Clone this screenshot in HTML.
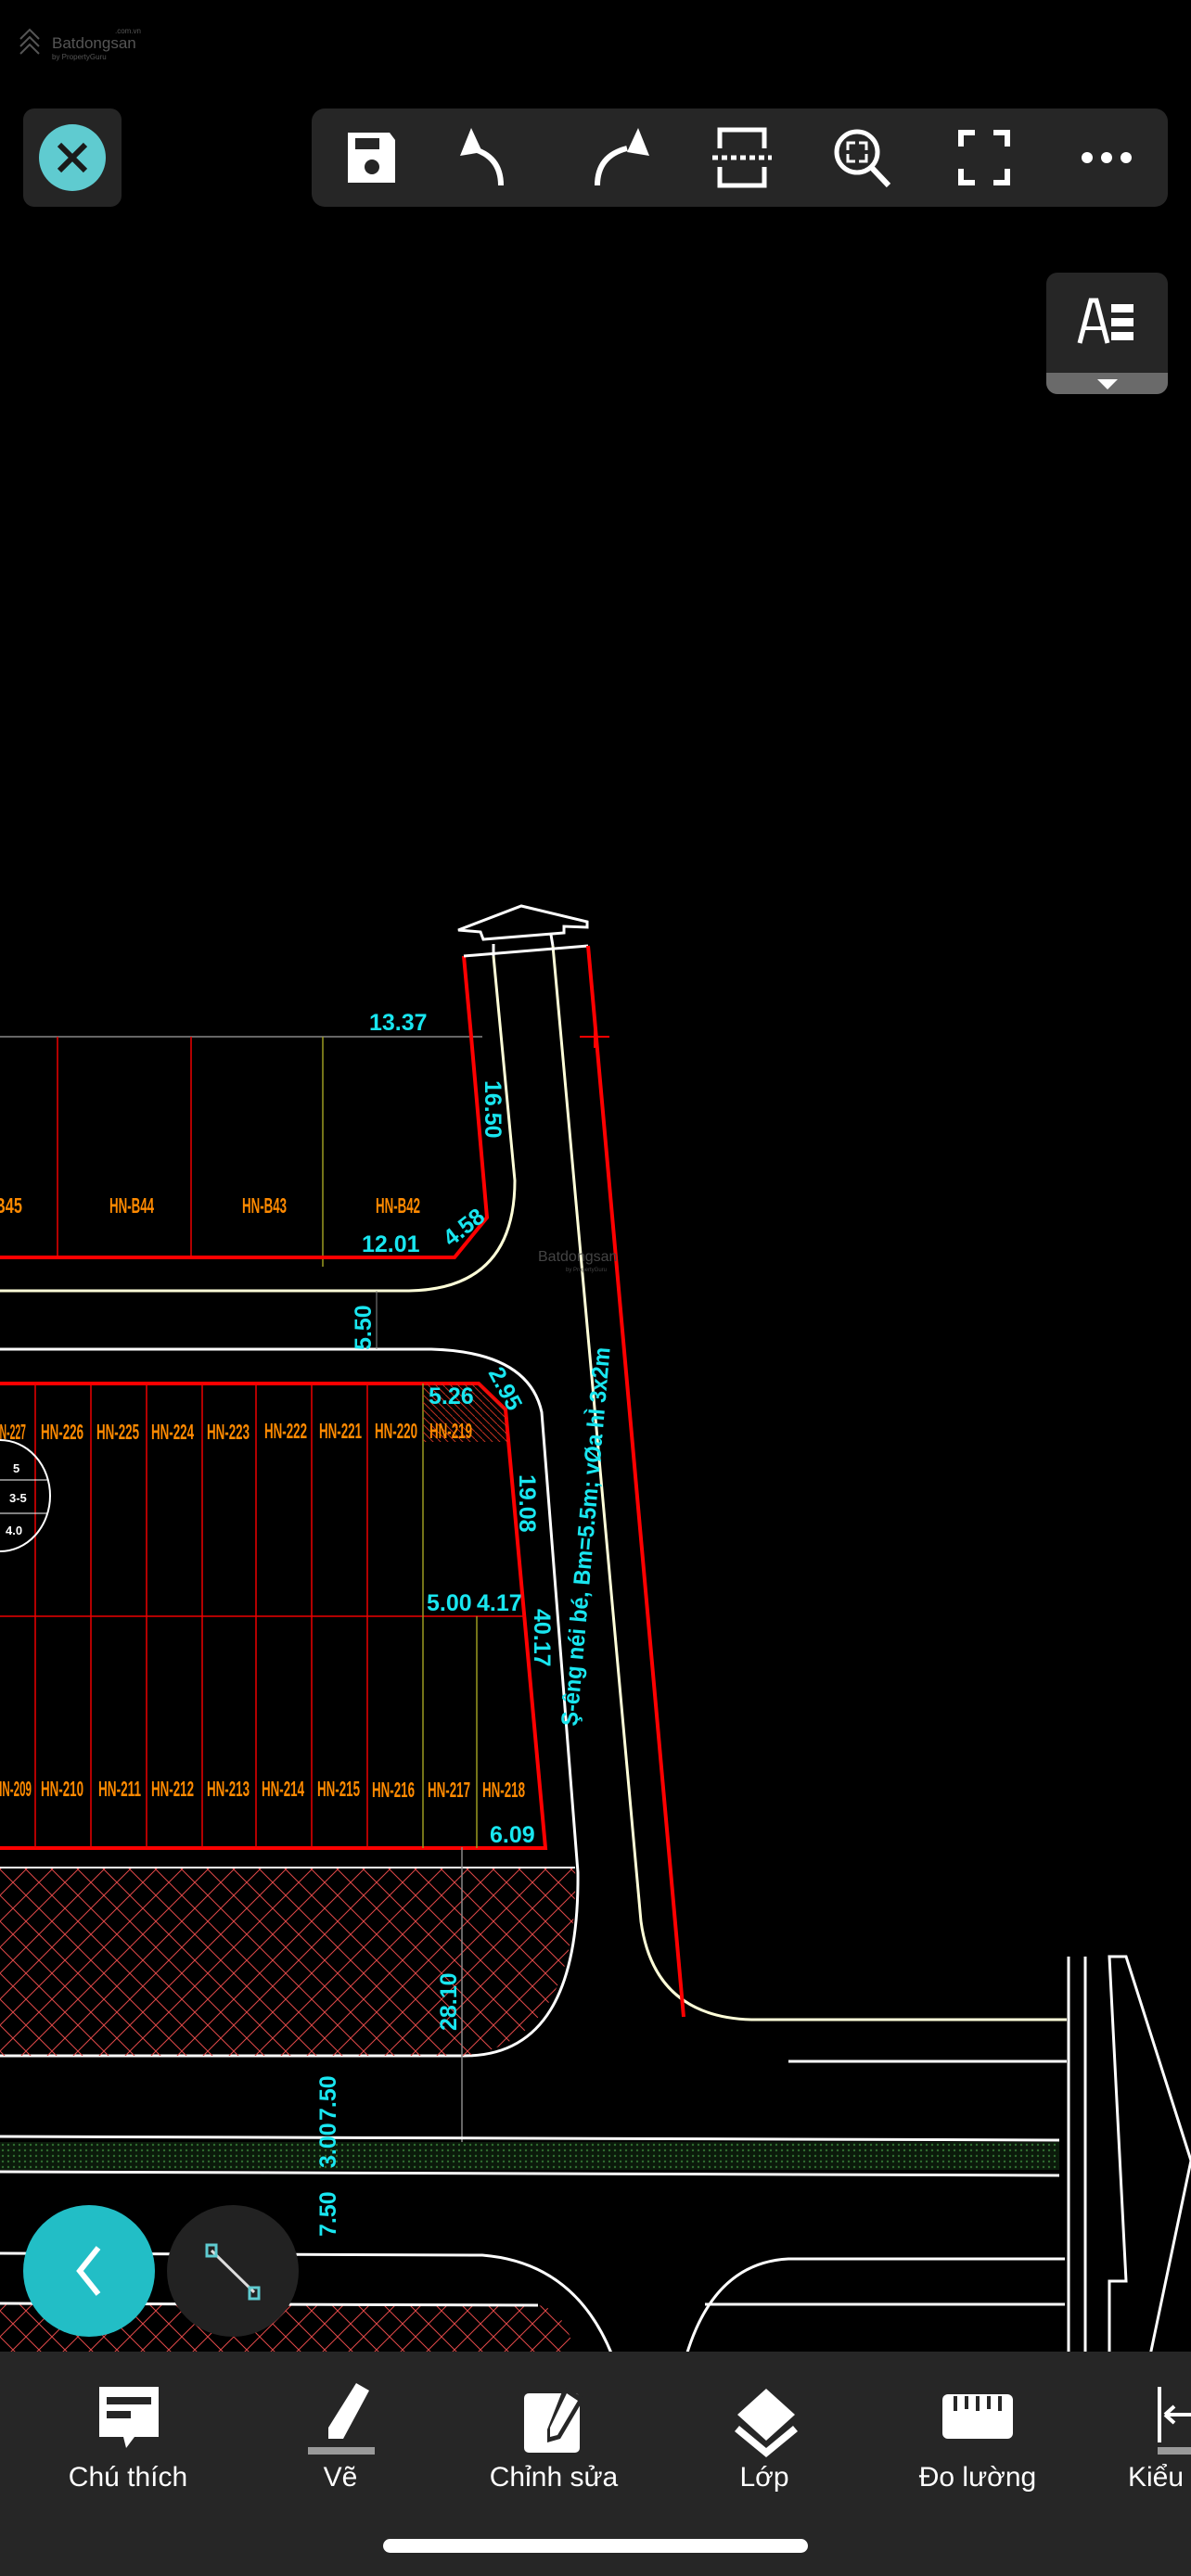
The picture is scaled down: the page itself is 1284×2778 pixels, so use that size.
<!DOCTYPE html>
<html><head><meta charset="utf-8"><style>
html,body{margin:0;padding:0;background:#000;}
body{width:1284px;height:2778px;overflow:hidden;position:relative;font-family:"Liberation Sans",sans-serif;}
svg{position:absolute;left:0;top:0;}
.c{fill:#19e6f0;font-family:"Liberation Sans",sans-serif;font-size:25px;font-weight:bold;}
.o{fill:#ff8a00;font-family:"Liberation Sans Narrow","Liberation Sans",sans-serif;font-size:23px;font-weight:bold;}
.lbl{fill:#fff;font-family:"Liberation Sans",sans-serif;font-size:30px;text-anchor:middle;}
</style></head><body>
<svg width="1284" height="2778" viewBox="0 0 1284 2778">
<defs>
<pattern id="hx" width="28" height="28" patternUnits="userSpaceOnUse">
<path d="M0 0L28 28M28 0L0 28" stroke="#e04848" stroke-width="1"/>
</pattern>
<pattern id="gd" width="6" height="6" patternUnits="userSpaceOnUse">
<rect width="6" height="6" fill="#0b1a0b"/><circle cx="3" cy="3" r="1.2" fill="#2f6b2f"/>
</pattern>
<pattern id="rh" width="8" height="8" patternUnits="userSpaceOnUse">
<path d="M0 0L8 8" stroke="#c03020" stroke-width="1"/>
</pattern>
</defs>

<g fill="none" stroke="#555" stroke-width="2">
<path d="M22 42L32 32L42 42M22 50L32 40L42 50M22 58L32 48L42 58"/>
</g>
<text x="56" y="52" fill="#555" font-size="17">Batdongsan</text>
<text x="124" y="36" fill="#555" font-size="8">.com.vn</text>
<text x="56" y="64" fill="#555" font-size="8">by PropertyGuru</text>

<line x1="0" y1="1118" x2="520" y2="1118" stroke="#888" stroke-width="1.5"/>
<line x1="62" y1="1118" x2="62" y2="1356" stroke="#e00" stroke-width="1.5"/>
<line x1="206" y1="1118" x2="206" y2="1356" stroke="#e00" stroke-width="1.5"/>
<line x1="348" y1="1118" x2="348" y2="1366" stroke="#9a9a20" stroke-width="1.5"/>
<path d="M0 1356L490 1356L525 1313L508 1118L500 1031" fill="none" stroke="#f00" stroke-width="4"/>
<text class="c" x="398" y="1111">13.37</text>
<text class="o" x="-6" y="1308" textLength="30" lengthAdjust="spacingAndGlyphs">B45</text>
<text class="o" x="118" y="1308" textLength="48" lengthAdjust="spacingAndGlyphs">HN-B44</text>
<text class="o" x="261" y="1308" textLength="48" lengthAdjust="spacingAndGlyphs">HN-B43</text>
<text class="o" x="405" y="1308" textLength="48" lengthAdjust="spacingAndGlyphs">HN-B42</text>
<text class="c" x="390" y="1350">12.01</text>
<text class="c" transform="translate(486 1345) rotate(-38)">4.58</text>
<text class="c" transform="translate(523 1165) rotate(90)">16.50</text>

<path d="M0 1392L441 1392Q555 1390 555 1273L532 1031" fill="none" stroke="#ffffd8" stroke-width="3"/>
<path d="M596 1020L691 2072Q705 2175 810 2178L1150 2178" fill="none" stroke="#ffffd8" stroke-width="3"/>
<path d="M0 1455L465 1455Q570 1458 584 1523L623 2019Q625 2217 501 2217L0 2217" fill="none" stroke="#fff" stroke-width="3"/>
<path d="M850 2223L1150 2223" stroke="#fff" stroke-width="3"/>
<line x1="406" y1="1392" x2="406" y2="1455" stroke="#888"/>
<text class="c" transform="translate(400 1456) rotate(-90)">5.50</text>

<path d="M494 1003L562 977L633 994L633 1000L608 999L608 1006L521 1013L518 1005Z" fill="none" stroke="#fff" stroke-width="3"/>
<path d="M500 1031L634 1020" stroke="#fff" stroke-width="3"/>
<path d="M532 1031L532 1018M596 1020L594 1008" stroke="#fff" stroke-width="3"/>
<line x1="634" y1="1020" x2="737" y2="2175" stroke="#f00" stroke-width="4"/>
<path d="M625 1118L657 1118M641 1106L641 1130" stroke="#f00" stroke-width="2"/>

<path d="M0 1492L516 1492L545 1520L588 1993L0 1993" fill="none" stroke="#f00" stroke-width="4"/>
<line x1="0" y1="1743" x2="566" y2="1743" stroke="#e00" stroke-width="1.5"/>
<g stroke="#e00" stroke-width="1.5">
<line x1="38" y1="1492" x2="38" y2="1993"/><line x1="98" y1="1492" x2="98" y2="1993"/>
<line x1="158" y1="1492" x2="158" y2="1993"/><line x1="218" y1="1492" x2="218" y2="1993"/>
<line x1="276" y1="1492" x2="276" y2="1993"/><line x1="336" y1="1492" x2="336" y2="1993"/>
<line x1="396" y1="1492" x2="396" y2="1993"/>
</g>
<line x1="456" y1="1492" x2="456" y2="1993" stroke="#9a9a20" stroke-width="1.5"/>
<line x1="514" y1="1743" x2="514" y2="1993" stroke="#9a9a20" stroke-width="1.5"/>
<path d="M456 1492L516 1492L545 1520L548 1555L456 1555Z" fill="url(#rh)"/>
<g>
<text class="o" x="-8" y="1552" textLength="36" lengthAdjust="spacingAndGlyphs">HN-227</text>
<text class="o" x="44" y="1552" textLength="46" lengthAdjust="spacingAndGlyphs">HN-226</text>
<text class="o" x="104" y="1552" textLength="46" lengthAdjust="spacingAndGlyphs">HN-225</text>
<text class="o" x="163" y="1552" textLength="46" lengthAdjust="spacingAndGlyphs">HN-224</text>
<text class="o" x="223" y="1552" textLength="46" lengthAdjust="spacingAndGlyphs">HN-223</text>
<text class="o" x="285" y="1551" textLength="46" lengthAdjust="spacingAndGlyphs">HN-222</text>
<text class="o" x="344" y="1551" textLength="46" lengthAdjust="spacingAndGlyphs">HN-221</text>
<text class="o" x="404" y="1551" textLength="46" lengthAdjust="spacingAndGlyphs">HN-220</text>
<text class="o" x="463" y="1551" textLength="46" lengthAdjust="spacingAndGlyphs">HN-219</text>
<text class="o" x="-6" y="1937" textLength="40" lengthAdjust="spacingAndGlyphs">HN-209</text>
<text class="o" x="44" y="1937" textLength="46" lengthAdjust="spacingAndGlyphs">HN-210</text>
<text class="o" x="106" y="1937" textLength="46" lengthAdjust="spacingAndGlyphs">HN-211</text>
<text class="o" x="163" y="1937" textLength="46" lengthAdjust="spacingAndGlyphs">HN-212</text>
<text class="o" x="223" y="1937" textLength="46" lengthAdjust="spacingAndGlyphs">HN-213</text>
<text class="o" x="282" y="1937" textLength="46" lengthAdjust="spacingAndGlyphs">HN-214</text>
<text class="o" x="342" y="1937" textLength="46" lengthAdjust="spacingAndGlyphs">HN-215</text>
<text class="o" x="401" y="1938" textLength="46" lengthAdjust="spacingAndGlyphs">HN-216</text>
<text class="o" x="461" y="1938" textLength="46" lengthAdjust="spacingAndGlyphs">HN-217</text>
<text class="o" x="520" y="1938" textLength="46" lengthAdjust="spacingAndGlyphs">HN-218</text>
</g>
<ellipse cx="0" cy="1613" rx="54" ry="60" fill="none" stroke="#fff" stroke-width="2"/>
<line x1="0" y1="1596" x2="52" y2="1596" stroke="#fff"/><line x1="0" y1="1632" x2="52" y2="1632" stroke="#fff"/>
<text x="14" y="1588" fill="#fff" font-size="13" font-weight="bold">5</text>
<text x="10" y="1620" fill="#fff" font-size="13" font-weight="bold">3-5</text>
<text x="6" y="1655" fill="#fff" font-size="13" font-weight="bold">4.0</text>

<text class="c" x="460" y="1737">5.00</text>
<text class="c" x="514" y="1737">4.17</text>
<text class="c" x="462" y="1514">5.26</text>
<text class="c" x="528" y="1987">6.09</text>
<text class="c" transform="translate(526 1480) rotate(62)">2.95</text>
<text class="c" transform="translate(560 1590) rotate(90)">19.08</text>
<text class="c" transform="translate(576 1735) rotate(90)">40.17</text>
<text class="c" font-size="24" textLength="410" lengthAdjust="spacingAndGlyphs" transform="translate(622 1862) rotate(-85)">Ş-êng néi bé, Bm=5.5m; vØa hÌ 3x2m</text>

<text x="580" y="1360" fill="#444" font-size="16">Batdongsan</text>
<text x="610" y="1371" fill="#444" font-size="6">by PropertyGuru</text>

<path d="M0 2014L620 2014Q625 2200 501 2217L0 2217Z" fill="url(#hx)"/>
<line x1="0" y1="2014" x2="620" y2="2014" stroke="#fff" stroke-width="2"/>
<line x1="498" y1="1992" x2="498" y2="2323" stroke="#888" stroke-width="1.5"/>
<text class="c" transform="translate(492 2190) rotate(-90)">28.10</text>

<line x1="0" y1="2304" x2="1142" y2="2308" stroke="#fff" stroke-width="3"/>
<rect x="0" y="2310" width="1142" height="30" fill="url(#gd)"/>
<line x1="0" y1="2342" x2="1142" y2="2346" stroke="#fff" stroke-width="3"/>
<text class="c" transform="translate(362 2287) rotate(-90)">7.50</text>
<text class="c" transform="translate(362 2338) rotate(-90)">3.00</text>
<text class="c" transform="translate(362 2412) rotate(-90)">7.50</text>
<path d="M0 2430L520 2432Q620 2440 660 2540" fill="none" stroke="#fff" stroke-width="3"/>
<path d="M0 2484L580 2486Q610 2490 620 2540L0 2540Z" fill="url(#hx)"/>
<path d="M0 2484L580 2486" fill="none" stroke="#fff" stroke-width="3"/>
<path d="M740 2540Q770 2440 850 2436L1148 2436" fill="none" stroke="#fff" stroke-width="3"/>
<path d="M760 2485L1148 2485" fill="none" stroke="#fff" stroke-width="3"/>
<path d="M1152 2110L1152 2540M1170 2110L1170 2540" stroke="#fff" stroke-width="3"/>
<path d="M1196 2540L1196 2460L1214 2460L1196 2110L1214 2110L1284 2330L1240 2540" fill="none" stroke="#fff" stroke-width="3"/>

<rect x="25" y="117" width="106" height="106" rx="12" fill="#252525"/>
<circle cx="78" cy="170" r="36" fill="#5fcbd0"/>
<path d="M64 156L92 184M92 156L64 184" stroke="#1a1a1a" stroke-width="6"/>
<rect x="336" y="117" width="923" height="106" rx="14" fill="#262626"/>
<path d="M375 143h45l6 8v46h-51z" fill="#fff"/>
<rect x="383" y="149" width="26" height="12" fill="#262626"/>
<circle cx="401" cy="180" r="8" fill="#262626"/>
<path d="M508 160Q540 168 540 200" fill="none" stroke="#fff" stroke-width="6"/>
<path d="M508 138L496 168L520 164Z" fill="#fff"/>
<path d="M644 200Q644 168 676 160" fill="none" stroke="#fff" stroke-width="6"/>
<path d="M688 138L700 168L676 164Z" fill="#fff"/>
<path d="M776 148v-8h48v8M776 192v8h48v-8M776 148v12M824 148v12M776 180v12M824 180v12" fill="none" stroke="#fff" stroke-width="5"/>
<path d="M768 170h64" stroke="#fff" stroke-width="5" stroke-dasharray="6 4"/>
<circle cx="924" cy="164" r="22" fill="none" stroke="#fff" stroke-width="5"/>
<path d="M940 181L958 200" stroke="#fff" stroke-width="6"/>
<path d="M914 162v-8h8M934 162v-8h-8M914 166v8h8M934 166v8h-8" fill="none" stroke="#fff" stroke-width="3"/>
<path d="M1036 158v-15h15M1086 158v-15h-15M1036 182v15h15M1086 182v15h-15" fill="none" stroke="#fff" stroke-width="6"/>
<circle cx="1172" cy="170" r="6" fill="#fff"/><circle cx="1193" cy="170" r="6" fill="#fff"/><circle cx="1214" cy="170" r="6" fill="#fff"/>

<rect x="1128" y="294" width="131" height="131" rx="12" fill="#262626"/>
<path d="M1128 402h131v11a12 12 0 0 1 -12 12h-107a12 12 0 0 1 -12 -12z" fill="#6a6a6a"/>
<path d="M1183 409h22l-11 11z" fill="#fff"/>
<path d="M1164 370L1176 324h6L1194 370" fill="none" stroke="#fff" stroke-width="5"/>
<path d="M1170 354h18" stroke="#fff" stroke-width="4"/>
<rect x="1198" y="328" width="24" height="9" fill="#fff"/>
<rect x="1198" y="343" width="24" height="9" fill="#fff"/>
<rect x="1198" y="358" width="24" height="9" fill="#fff"/>

<circle cx="96" cy="2449" r="71" fill="#22bec6"/>
<path d="M106 2424L86 2449L106 2474" fill="none" stroke="#fff" stroke-width="6"/>
<circle cx="251" cy="2449" r="71" fill="#222"/>
<path d="M228 2427L274 2472" stroke="#ddd" stroke-width="3"/>
<rect x="223" y="2421" width="10" height="12" fill="none" stroke="#5fcbd0" stroke-width="3"/>
<rect x="269" y="2467" width="10" height="12" fill="none" stroke="#5fcbd0" stroke-width="3"/>

<rect x="0" y="2536" width="1284" height="242" fill="#262626"/>
<path d="M107 2574h64v54h-26l-9 12l-3-12h-26z" fill="#fff"/>
<rect x="115" y="2585" width="48" height="8" fill="#262626"/><rect x="115" y="2600" width="26" height="8" fill="#262626"/>
<path d="M384 2570l14 8l-28 52h-16l0-12z" fill="#fff"/>
<rect x="332" y="2639" width="72" height="8" fill="#999"/>
<rect x="565" y="2581" width="60" height="64" rx="5" fill="#fff"/>
<path d="M608 2574l22 12l-26 44l-14 4l0-14z" fill="#262626"/>
<path d="M611 2581l12 8l-22 37l-8 2l0-10z" fill="#fff"/>
<path d="M826 2576l31 28l-31 28l-31-28z" fill="#fff"/>
<path d="M797 2616l29 24l29-24l5 6l-34 28l-34-28z" fill="#fff"/>
<rect x="1016" y="2582" width="76" height="48" rx="6" fill="#fff"/>
<g stroke="#262626" stroke-width="4"><path d="M1030 2584v16M1042 2584v14M1054 2584v16M1066 2584v14M1078 2584v16"/></g>
<path d="M1250 2574v60" stroke="#fff" stroke-width="4"/>
<path d="M1256 2604h28M1256 2604l10-9M1256 2604l10 9" stroke="#fff" stroke-width="4"/>
<rect x="1248" y="2639" width="36" height="8" fill="#999"/>
<text class="lbl" x="138" y="2681">Chú thích</text>
<text class="lbl" x="367" y="2681">Vẽ</text>
<text class="lbl" x="597" y="2681">Chỉnh sửa</text>
<text class="lbl" x="824" y="2681">Lớp</text>
<text class="lbl" x="1054" y="2681">Đo lường</text>
<text class="lbl" x="1216" y="2681" style="text-anchor:start">Kiểu</text>
<rect x="413" y="2738" width="458" height="15" rx="7.5" fill="#fff"/>
</svg>
</body></html>
